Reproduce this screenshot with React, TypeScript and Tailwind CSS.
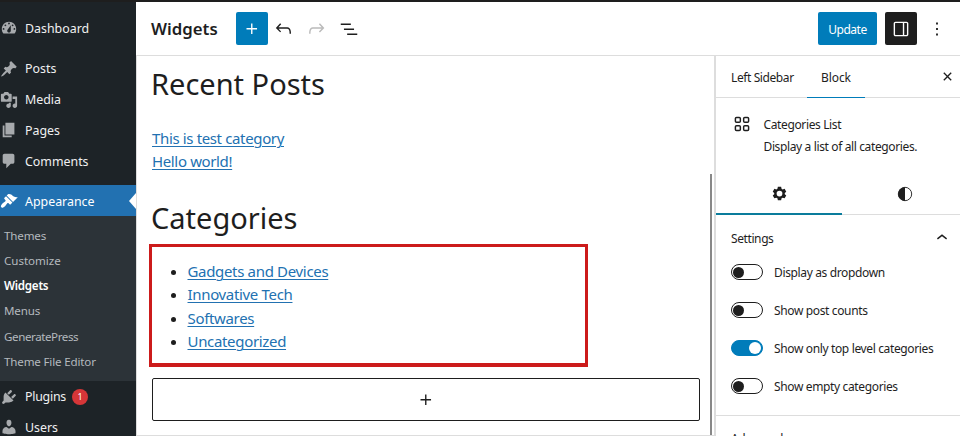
import type { ReactNode } from "react";

const dash = {
  dashboard:
    "M3.76 16h12.48c1.1-1.37 1.76-3.11 1.76-5 0-4.42-3.58-8-8-8s-8 3.58-8 8c0 1.89.66 3.63 1.76 5zM10 4c.55 0 1 .45 1 1s-.45 1-1 1-1-.45-1-1 .45-1 1-1zM6 6c.55 0 1 .45 1 1s-.45 1-1 1-1-.45-1-1 .45-1 1-1zm8 0c.55 0 1 .45 1 1s-.45 1-1 1-1-.45-1-1 .45-1 1-1zm-5.37 5.55L12 7v6c0 1.1-.9 2-2 2s-2-.9-2-2c0-.57.24-1.08.63-1.45zM4 10c.55 0 1 .45 1 1s-.45 1-1 1-1-.45-1-1 .45-1 1-1zm12 0c.55 0 1 .45 1 1s-.45 1-1 1-1-.45-1-1 .45-1 1-1z",
  posts:
    "M10.44 3.02l1.82-1.82 6.36 6.35-1.83 1.82c-1.05-.68-2.48-.57-3.41.36l-.75.75c-.92.93-1.04 2.35-.35 3.41l-1.83 1.82-2.41-2.41-2.8 2.79c-.42.42-3.38 2.71-3.8 2.29s1.86-3.39 2.28-3.81l2.79-2.79L4.1 9.36l1.83-1.82c1.05.69 2.48.57 3.4-.36l.75-.75c.93-.92 1.05-2.35.36-3.41z",
  media:
    "M13 11V4c0-.55-.45-1-1-1h-1.67L9 1H5L3.67 3H2c-.55 0-1 .45-1 1v7c0 .55.45 1 1 1h10c.55 0 1-.45 1-1zM7 4.5c1.38 0 2.5 1.12 2.5 2.5S8.38 9.5 7 9.5 4.5 8.38 4.5 7 5.62 4.5 7 4.5zM14 6h5v10.5c0 1.38-1.12 2.5-2.5 2.5S14 17.88 14 16.5s1.12-2.5 2.5-2.5c.17 0 .34.02.5.05V9h-3V6zm-4 8.05V13h2v3.5c0 1.38-1.12 2.5-2.5 2.5S7 17.88 7 16.5 8.12 14 9.5 14c.17 0 .34.02.5.05z",
  pages: "M6 15V2h10v13H6zm-1 1h8v2H3V5h2v11z",
  comments:
    "M5 2h9c1.1 0 2 .9 2 2v7c0 1.1-.9 2-2 2h-2l-5 5v-5H5c-1.1 0-2-.9-2-2V4c0-1.1.9-2 2-2z",
  appearance:
    "M14.48 11.06L7.41 3.99l1.5-1.5c.5-.56 2.3-.47 3.51.32 1.21.8 1.43 1.28 2.91 2.1 1.18.64 2.45 1.26 4.45.85zm-.71.71L6.7 4.7 4.93 6.47c-.39.39-.39 1.02 0 1.41l1.06 1.06c.39.39.39 1.03 0 1.42-.6.6-1.43 1.11-2.21 1.69-.35.26-.7.53-1.01.84C1.43 14.23.4 16.08 1.4 17.07c.99 1 2.84-.03 4.18-1.36.31-.31.58-.66.85-1.02.57-.78 1.08-1.61 1.69-2.21.39-.39 1.02-.39 1.41 0l1.06 1.06c.39.39 1.02.39 1.41 0z",
  plugins:
    "M13.11 4.36L9.87 7.6 8 5.73l3.24-3.24c.35-.34 1.05-.2 1.56.32.52.51.66 1.21.31 1.55zm-8 1.77l.91-1.12 9.01 9.01-1.19.84c-.71.71-2.63 1.16-3.82 1.16H6.14L4.9 17.26c-.59.59-1.54.59-2.12 0-.59-.58-.59-1.53 0-2.12l1.24-1.24v-3.88c0-1.13.4-3.19 1.09-3.89zm7.26 3.97l3.24-3.24c.34-.35 1.04-.21 1.55.31.52.51.66 1.21.31 1.55l-3.24 3.25z",
  users:
    "M10 9.25c-2.27 0-2.73-3.44-2.73-3.44C7 4.02 7.82 2 9.97 2c2.16 0 2.98 2.02 2.71 3.81 0 0-.41 3.44-2.68 3.44zm0 2.57L12.72 10c2.39 0 4.52 2.33 4.52 4.53v2.49s-3.65 1.13-7.24 1.13c-3.65 0-7.24-1.13-7.24-1.13v-2.49c0-2.25 1.94-4.48 4.47-4.48z",
};

function MenuItem({ icon, label, className = "", children }: { icon: keyof typeof dash; label: string; className?: string; children?: ReactNode }) {
  return (
    <a className={`flex h-[30.8px] shrink-0 items-center text-[12.4px] text-[#f0f0f1] ${className}`}>
      <svg viewBox="0 0 20 20" className={`-mt-[2px] mr-[7px] size-[18px] shrink-0 ${icon === "appearance" ? "fill-white" : "fill-[#a7aaad]"}`}>
        <path d={dash[icon]} />
      </svg>
      {label}
      {children}
    </a>
  );
}

function Icon({ d, className = "" }: { d: string; className?: string }) {
  return (
    <svg viewBox="0 0 24 24" className={`shrink-0 fill-current ${className}`}>
      <path d={d} />
    </svg>
  );
}

const PLUS = "M11 12.5V17.5H12.5V12.5H17.5V11H12.5V6H11V11H6V12.5H11Z";

function Toggle({ label, on = false }: { label: string; on?: boolean }) {
  return (
    <div className="flex h-[38px] items-center">
      <span
        className={`mr-[11px] flex h-4 w-8 items-center rounded-full border ${on ? "justify-end border-[#007cba] bg-[#007cba] pr-px" : "border-[#1e1e1e] bg-white pl-px"}`}
      >
        <span className={`rounded-full ${on ? "size-3 bg-white" : "size-[11px] bg-[#1e1e1e]"}`} />
      </span>
      <span className="pt-[2px]">{label}</span>
    </div>
  );
}

function Sidebar() {
  return (
    <nav className="flex w-[136px] shrink-0 flex-col overflow-hidden bg-[#1d2327] pt-[12px]">
      <MenuItem icon="dashboard" label="Dashboard" className="mb-[9.6px]" />
      <MenuItem icon="posts" label="Posts" />
      <MenuItem icon="media" label="Media" />
      <MenuItem icon="pages" label="Pages" />
      <MenuItem icon="comments" label="Comments" />
      <MenuItem icon="appearance" label="Appearance" className="mt-[7.4px] bg-[#2271b1] pt-[3px] text-white">
        <span className="-mt-[2px] ml-auto border-y-[8px] border-r-[7px] border-y-transparent border-r-white" />
      </MenuItem>
      <ul className="mb-[1.5px] h-[165px] shrink-0 bg-[#2c3338] pt-[7px] pl-[4px] text-[11.6px] leading-[25.2px] tracking-[-0.17px] text-[#b4b9be]">
        <li>Themes</li>
        <li className="tracking-[-0.05px]">Customize</li>
        <li className="font-semibold tracking-[-0.25px] text-white">Widgets</li>
        <li>Menus</li>
        <li className="tracking-[-0.42px]">GeneratePress</li>
        <li>Theme File Editor</li>
      </ul>
      <MenuItem icon="plugins" label="Plugins" className="tracking-[-0.25px]">
        <span className="-mt-px ml-[6px] flex size-4 items-center justify-center rounded-full bg-[#d63638] text-[9px] text-white">1</span>
      </MenuItem>
      <MenuItem icon="users" label="Users" />
    </nav>
  );
}

function Toolbar() {
  return (
    <header className="flex h-[54px] shrink-0 items-center border-b border-[#ddd] bg-white pl-[15px]">
      <h1 className="w-[85px] pt-px text-[16.8px] font-semibold">Widgets</h1>
      <button className="flex h-[33px] w-8 items-center justify-center rounded-xs bg-[#007cba] text-white">
        <Icon d={PLUS} className="size-[22px]" />
      </button>
      <Icon className="ml-[4px] size-[23px]" d="M18.3 11.7c-.6-.6-1.4-.9-2.3-.9H6.7l2.9-3.3-1.1-1-4.5 5L8.5 16l1-1-2.7-2.7H16c.5 0 .9.2 1.3.5 1 1 1 3.4 1 4.5v.3h1.5v-.2c0-1.5 0-4.3-1.5-5.7z" />
      <Icon className="ml-[10px] size-[23px] text-[#bbb]" d="M15.6 6.5l-1.1 1 2.9 3.3H8c-.9 0-1.7.3-2.3.9-1.4 1.5-1.4 4.2-1.4 5.6v.2h1.5v-.3c0-1.1 0-3.5 1-4.5.3-.3.7-.5 1.3-.5h9.2L14.5 15l1.1 1.1 4.6-4.6-4.6-5z" />
      <Icon className="ml-[10px] size-[22px]" d="M3 6h11v1.5H3V6Zm3.5 5.5h11V13h-11v-1.5ZM21 17H10v1.5h11V17Z" />
      <button className="ml-auto flex h-[33px] w-[59px] items-center justify-center rounded-xs bg-[#007cba] pt-[3px] text-[12px] tracking-[-0.45px] text-white">Update</button>
      <button className="ml-2 flex h-[33px] w-8 items-center justify-center rounded-xs bg-[#1e1e1e] text-white">
        <Icon className="size-[22px]" d="M18 4H6c-1.1 0-2 .9-2 2v12c0 1.1.9 2 2 2h12c1.1 0 2-.9 2-2V6c0-1.1-.9-2-2-2zm-4 14.5H6c-.3 0-.5-.2-.5-.5V6c0-.3.2-.5.5-.5h8v13zm4.5-.5c0 .3-.2.5-.5.5h-2.5v-13H18c.3 0 .5.2.5.5v12z" />
      </button>
      <Icon className="mr-3 ml-[9px] size-[22px]" d="M13 19h-2v-2h2v2zm0-6h-2v-2h2v2zm0-6h-2V5h2v2z" />
    </header>
  );
}

function Canvas() {
  const link = "underline decoration-1 underline-offset-[1.5px]";
  return (
    <main className="flex min-w-0 flex-1 border-b border-l border-[#ddd] bg-white">
      <div className="flex w-[573px] shrink-0 flex-col pl-[15px]">
        <h2 className="-ml-px mt-[8px] h-[40px] text-[29px] leading-[40px]">Recent Posts</h2>
        <div className="mt-[23px] h-[47px] text-[15px] leading-[23px] tracking-[-0.36px] text-[#2271b1]">
          <div><a className={link}>This is test category</a></div>
          <div><a className={link}>Hello world!</a></div>
        </div>
        <h2 className="-ml-px mt-[24px] h-[40px] text-[29px] leading-[40px]">Categories</h2>
        <ul className="mt-[6px] -ml-[3px] h-[123px] w-[439px] list-disc border-[3px] border-b-4 border-[#cc1b1b] pt-[13px] pl-[35.5px] text-[15px] leading-[23.4px] tracking-[-0.33px] text-[#2271b1] marker:text-[#1e1e1e]">
          <li><a className={link}>Gadgets and Devices</a></li>
          <li><a className={link}>Innovative Tech</a></li>
          <li><a className={link}>Softwares</a></li>
          <li><a className={link}>Uncategorized</a></li>
        </ul>
        <button className="mt-[11px] flex h-[43px] w-[548px] items-center justify-center rounded-xs border border-[#1e1e1e]">
          <Icon d={PLUS} className="size-[22px]" />
        </button>
      </div>
      <div className="mt-[118px] w-[2px] bg-[#888]" />
    </main>
  );
}

function Inspector() {
  return (
    <aside className="flex w-[246px] shrink-0 flex-col overflow-hidden border-l-2 border-[#ddd] bg-white text-[12px] tracking-[-0.4px]">
      <div className="flex h-[42px] shrink-0 border-b border-[#ddd] pl-[15px] leading-[44px]">
        <span className="w-[76px]">Left Sidebar</span>
        <span className="-mb-px h-[42px] w-[58px] border-b border-[#007cba] text-center tracking-[-0.1px]">Block</span>
        <Icon className="mt-[10px] mr-[2px] ml-auto size-[21px]" d="M12 13.06l3.712 3.713 1.061-1.06L13.061 12l3.712-3.712-1.06-1.06L12 10.938 8.288 7.227l-1.061 1.06L10.939 12l-3.712 3.712 1.06 1.061L12 13.061z" />
      </div>
      <div className="flex h-[75px] shrink-0 pt-[16px] pl-[15px]">
        <svg viewBox="0 0 24 24" className="-mt-px mr-[10.5px] size-[22px] fill-none stroke-current stroke-[1.6]">
          <rect x="4.8" y="4.8" width="5.4" height="5.4" rx="1.2" />
          <rect x="13.8" y="4.8" width="5.4" height="5.4" rx="1.2" />
          <rect x="4.8" y="13.8" width="5.4" height="5.4" rx="1.2" />
          <rect x="13.8" y="13.8" width="5.4" height="5.4" rx="1.2" />
        </svg>
        <div className="leading-[22px] tracking-[-0.37px]">
          <div>Categories List</div>
          <div>Display a list of all categories.</div>
        </div>
      </div>
      <div className="flex h-[42px] shrink-0">
        <div className="flex w-[126px] items-center justify-center border-b-2 border-[#0a7c9c] pt-px">
          <svg viewBox="0 0 24 24" className="size-[23px]">
            <path
              className="fill-current"
              fillRule="evenodd"
              d="M10.3 5h3.4l.45 2.1 1.15.66 2.05-.66 1.7 2.95L17.5 11.4v1.3l1.55 1.35-1.7 2.95-2.05-.66-1.15.66-.45 2.1h-3.4l-.45-2.1-1.15-.66-2.05.66-1.7-2.95L6.5 12.7v-1.3L4.95 10.05 6.65 7.1l2.05.66 1.15-.66zM12 9a3 3 0 1 0 0 6 3 3 0 0 0 0-6z"
            />
          </svg>
        </div>
        <div className="flex flex-1 items-center justify-center border-b border-[#ddd] pl-[7px]">
          <svg viewBox="0 0 24 24" className="size-[22px]">
            <circle cx="12" cy="12" r="7.3" className="fill-none stroke-current" />
            <path d="M12 4.5a7.5 7.5 0 0 0 0 15z" className="fill-current" />
          </svg>
        </div>
      </div>
      <section className="h-[201px] shrink-0 border-b border-[#ddd] pl-[15px]">
        <div className="flex h-[38px] items-center justify-between pt-[9px]">
          <span className="pt-px">Settings</span>
          <Icon className="mr-[7px] mb-[2px] size-[22px]" d="M6.5 12.4L12 8l5.5 4.4-.9 1.2L12 10l-4.5 3.6-1-1.2z" />
        </div>
        <div className="tracking-[-0.36px]">
          <Toggle label="Display as dropdown" />
          <Toggle label="Show post counts" />
          <Toggle label="Show only top level categories" on />
          <Toggle label="Show empty categories" />
        </div>
      </section>
      <div className="h-5 shrink-0 pt-[14px] pl-[15px] leading-[18px]">Advanced</div>
    </aside>
  );
}

export default function App() {
  return (
    <div className="flex h-[436px] w-[960px] flex-col overflow-hidden border-t-2 border-[#1e1e1e] bg-white font-['Noto_Sans','Open_Sans',sans-serif] text-[#1e1e1e]">
      <div className="flex min-h-0 flex-1">
        <Sidebar />
        <div className="flex min-w-0 flex-1 flex-col">
          <Toolbar />
          <div className="flex min-h-0 flex-1">
            <Canvas />
            <Inspector />
          </div>
        </div>
      </div>
    </div>
  );
}
